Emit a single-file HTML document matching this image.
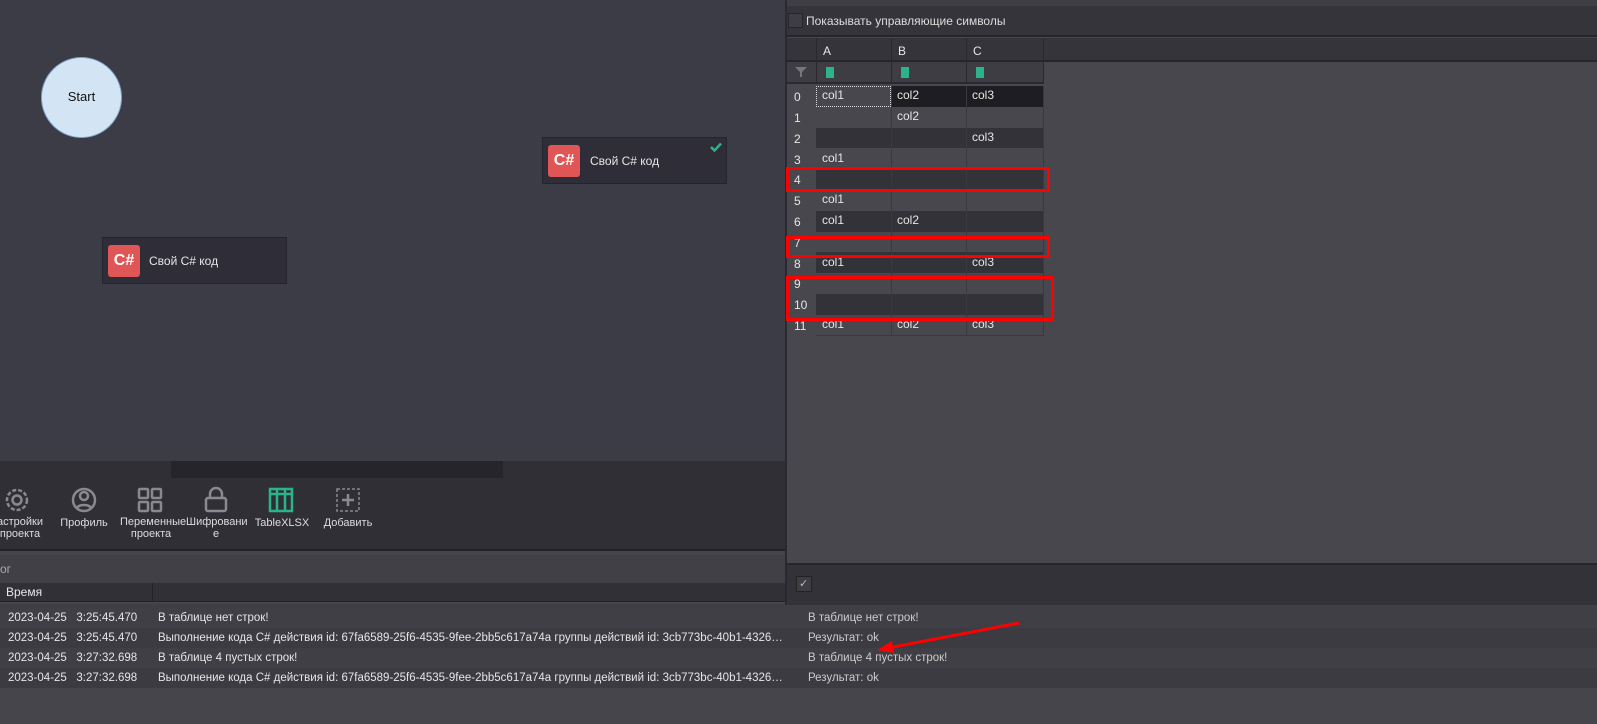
<!DOCTYPE html>
<html><head><meta charset="utf-8"><style>
*{margin:0;padding:0;box-sizing:border-box}
body{width:1597px;height:724px;overflow:hidden;background:#46454b;font-family:"Liberation Sans","DejaVu Sans",sans-serif;font-size:12px;color:#e6e6e6;position:relative}
.a{position:absolute}
.t{position:absolute;white-space:nowrap;line-height:14px}
.lg{font-size:11.5px}
.m{width:626px;overflow:hidden;text-overflow:ellipsis}
</style></head><body>
<!-- canvas -->
<div class="a" style="left:0;top:0;width:785px;height:461px;background:#3c3c46"></div>
<div class="a" style="left:41px;top:57px;width:81px;height:81px;border-radius:50%;background:#d3e5f5;border:1px solid #7ea6cf"></div>
<div class="t" style="left:41px;top:90px;width:81px;text-align:center;color:#111;font-size:13px">Start</div>
<div class="a" style="left:102px;top:237px;width:185px;height:47px;background:#2f2e38;border:1px solid #25242c"></div>
<div class="a" style="left:108px;top:245px;width:32px;height:32px;background:#e05555;border-radius:3px;color:#fff;font-weight:bold;font-size:16px;line-height:32px;text-align:center">C#</div>
<div class="t" style="left:149px;top:254px">Свой C# код</div>
<div class="a" style="left:542px;top:137px;width:185px;height:47px;background:#2f2e38;border:1px solid #25242c"></div>
<div class="a" style="left:548px;top:145px;width:32px;height:32px;background:#e05555;border-radius:3px;color:#fff;font-weight:bold;font-size:16px;line-height:32px;text-align:center">C#</div>
<div class="t" style="left:590px;top:154px">Свой C# код</div>
<svg class="a" style="left:710px;top:142px" width="12" height="10"><path d="M1 5l3.5 3.5L11 1.5" stroke="#2bb38a" stroke-width="2.5" fill="none"/></svg>
<!-- scrollbar + toolbar -->
<div class="a" style="left:0;top:461px;width:785px;height:89px;background:#302f36"></div>
<div class="a" style="left:171px;top:461px;width:332px;height:17px;background:#26252b"></div>
<div class="a" style="left:0;top:549px;width:785px;height:2px;background:#242329"></div>
<svg class="a" style="left:0;top:486px" width="380" height="30" fill="none" stroke="#8a898f" stroke-width="2.5">
<circle cx="17" cy="14" r="10" stroke-dasharray="4 2"/><circle cx="17" cy="14" r="4.5"/>
<circle cx="84" cy="14" r="11"/><circle cx="84" cy="10" r="4"/><path d="M77 22c2-4 12-4 14 0"/>
<rect x="139" y="3" width="9" height="9" rx="1"/><rect x="152" y="3" width="9" height="9" rx="1"/><rect x="139" y="16" width="9" height="9" rx="1"/><rect x="152" y="16" width="9" height="9" rx="1"/>
<path d="M210 12v-4a6 6 0 0 1 12 0v4"/><rect x="206" y="12" width="20" height="13" rx="2"/>
<g stroke="#2bb38a"><rect x="270" y="3" width="22" height="22"/><path d="M270 8h22M277 3v22M285 3v22"/></g>
<rect x="337" y="3" width="22" height="22" stroke-dasharray="3 2" stroke-width="1.5"/><path d="M348 8v12M342 14h12"/>
</svg>
<div class="t" style="left:-4px;top:516px;color:#ddd;font-size:11px;line-height:12px;text-align:center;width:48px">астройки<br>проекта</div>
<div class="t" style="left:60px;top:516px;color:#ddd;font-size:11px;width:48px;text-align:center">Профиль</div>
<div class="t" style="left:120px;top:516px;color:#ddd;font-size:11px;line-height:12px;width:62px;text-align:center">Переменные<br>проекта</div>
<div class="t" style="left:186px;top:516px;color:#ddd;font-size:11px;line-height:12px;width:60px;text-align:center">Шифровани<br>е</div>
<div class="t" style="left:254px;top:516px;color:#ddd;font-size:11px;width:56px;text-align:center">TableXLSX</div>
<div class="t" style="left:322px;top:516px;color:#ddd;font-size:11px;width:52px;text-align:center">Добавить</div>
<!-- log -->
<div class="a" style="left:0;top:555px;width:785px;height:28px;background:#414047"></div>
<div class="t" style="left:0;top:562px;color:#aaa">ог</div>
<div class="a" style="left:0;top:583px;width:1597px;height:19px;background:#313036;border-bottom:1px solid #242329"></div>
<div class="a" style="left:152px;top:583px;width:1px;height:19px;background:#242329"></div>
<div class="t" style="left:6px;top:585px">Время</div>
<div class="a" style="left:0;top:604px;width:1597px;height:84px;background:#403f46"></div>
<div class="a" style="left:0;top:628px;width:1597px;height:20px;background:#3c3b42"></div>
<div class="a" style="left:0;top:668px;width:1597px;height:20px;background:#3c3b42"></div>
<div class="t lg" style="left:8px;top:611px">2023-04-25&nbsp;&nbsp; 3:25:45.470</div>
<div class="t lg m" style="left:158px;top:611px">В таблице нет строк!</div>
<div class="t lg" style="left:8px;top:631px">2023-04-25&nbsp;&nbsp; 3:25:45.470</div>
<div class="t lg m" style="left:158px;top:631px">Выполнение кода C# действия id: 67fa6589-25f6-4535-9fee-2bb5c617a74a группы действий id: 3cb773bc-40b1-4326-9358-a8b2c1d4e5f6</div>
<div class="t lg" style="left:8px;top:651px">2023-04-25&nbsp;&nbsp; 3:27:32.698</div>
<div class="t lg m" style="left:158px;top:651px">В таблице 4 пустых строк!</div>
<div class="t lg" style="left:8px;top:671px">2023-04-25&nbsp;&nbsp; 3:27:32.698</div>
<div class="t lg m" style="left:158px;top:671px">Выполнение кода C# действия id: 67fa6589-25f6-4535-9fee-2bb5c617a74a группы действий id: 3cb773bc-40b1-4326-9358-a8b2c1d4e5f6</div>
<div class="t lg" style="left:808px;top:611px;color:#ccc">В таблице нет строк!</div>
<div class="t lg" style="left:808px;top:631px;color:#ccc">Результат: ok</div>
<div class="t lg" style="left:808px;top:651px;color:#ccc">В таблице 4 пустых строк!</div>
<div class="t lg" style="left:808px;top:671px;color:#ccc">Результат: ok</div>
<svg class="a" style="left:870px;top:615px" width="160" height="45"><path d="M149 8L18 33" stroke="#f00" stroke-width="3"/><path d="M7 35L22 26L24 38Z" fill="#f00"/></svg>
<!-- right panel -->
<div class="a" style="left:785px;top:0;width:812px;height:605px;background:#48474d;border-left:2px solid #2a292f"></div>
<div class="a" style="left:787px;top:0;width:810px;height:6px;background:#3f3e45"></div>
<div class="a" style="left:787px;top:6px;width:810px;height:31px;background:#35343a;border-bottom:2px solid #26252b"></div>
<div class="a" style="left:788px;top:13px;width:15px;height:15px;background:#3e3d44;border:1px solid #26252b"></div>
<div class="t" style="left:806px;top:14px;color:#ddd">Показывать управляющие символы</div>
<div class="a" style="left:787px;top:38px;width:810px;height:24px;background:#35343a;border-bottom:2px solid #26252b"></div>
<div class="a" style="left:787px;top:62px;width:256px;height:22px;background:#3e3d44;border-bottom:2px solid #2a292f"></div>
<svg class="a" style="left:795px;top:67px" width="12" height="10"><path d="M0 0h12L7 5v5H5V5Z" fill="#777"/></svg>
<div class="a" style="left:787px;top:563px;width:810px;height:42px;background:#333238;border-top:2px solid #26252b"></div>
<div class="a" style="left:796px;top:576px;width:16px;height:16px;background:#3e3d44;border:1px solid #222"></div>
<div class="t" style="left:799px;top:577px;color:#bbb;font-size:11px">✓</div>
<div class="a" style="left:816px;top:38px;width:1px;height:46px;background:#2a292f"></div>
<div class="a" style="left:891px;top:38px;width:1px;height:46px;background:#2a292f"></div>
<div class="a" style="left:966px;top:38px;width:1px;height:46px;background:#2a292f"></div>
<div class="a" style="left:1043px;top:38px;width:1px;height:46px;background:#2a292f"></div>
<div class="t" style="left:823px;top:44px">A</div>
<div class="t" style="left:898px;top:44px">B</div>
<div class="t" style="left:973px;top:44px">C</div>
<div class="a" style="left:826px;top:67px;width:8px;height:11px;background:#2bb38a"></div>
<div class="a" style="left:901px;top:67px;width:8px;height:11px;background:#2bb38a"></div>
<div class="a" style="left:976px;top:67px;width:8px;height:11px;background:#2bb38a"></div>
<!-- rows -->
<div class="a" style="left:787px;top:86px">
<div style="position:relative;width:257px">
<div class="a" style="top:0;left:29px;width:227px;height:21px;background:#333238"></div>
<div class="a" style="top:0;left:29px;width:75px;height:21px;background:#48474d;border:1px dotted #ddd"></div>
<div class="a" style="top:0;left:104px;width:152px;height:21px;background:#1e1d22"></div>
<div class="a" style="top:41.6px;left:29px;width:227px;height:20.8px;background:#333238"></div>
<div class="a" style="top:83.2px;left:29px;width:227px;height:20.8px;background:#333238"></div>
<div class="a" style="top:124.8px;left:29px;width:227px;height:20.8px;background:#333238"></div>
<div class="a" style="top:166.4px;left:29px;width:227px;height:20.8px;background:#333238"></div>
<div class="a" style="top:208px;left:29px;width:227px;height:20.8px;background:#333238"></div>
<div class="a" style="top:0;left:104px;width:1px;height:250px;background:#3a393f"></div>
<div class="a" style="top:0;left:179px;width:1px;height:250px;background:#3a393f"></div>
<div class="a" style="top:0;left:256px;width:1px;height:250px;background:#3a393f"></div>
<div class="a" style="top:249px;left:29px;width:228px;height:1px;background:#3a393f"></div>
</div></div>
<div class="t" style="left:794px;top:90px">0</div><div class="t" style="left:822px;top:88px">col1</div><div class="t" style="left:897px;top:88px">col2</div><div class="t" style="left:972px;top:88px">col3</div>
<div class="t" style="left:794px;top:111px">1</div><div class="t" style="left:897px;top:109px">col2</div>
<div class="t" style="left:794px;top:132px">2</div><div class="t" style="left:972px;top:130px">col3</div>
<div class="t" style="left:794px;top:153px">3</div><div class="t" style="left:822px;top:151px">col1</div>
<div class="t" style="left:794px;top:173px">4</div>
<div class="t" style="left:794px;top:194px">5</div><div class="t" style="left:822px;top:192px">col1</div>
<div class="t" style="left:794px;top:215px">6</div><div class="t" style="left:822px;top:213px">col1</div><div class="t" style="left:897px;top:213px">col2</div>
<div class="t" style="left:794px;top:236px">7</div>
<div class="t" style="left:794px;top:257px">8</div><div class="t" style="left:822px;top:255px">col1</div><div class="t" style="left:972px;top:255px">col3</div>
<div class="t" style="left:794px;top:277px">9</div>
<div class="t" style="left:794px;top:298px">10</div>
<div class="t" style="left:794px;top:319px">11</div><div class="t" style="left:822px;top:317px">col1</div><div class="t" style="left:897px;top:317px">col2</div><div class="t" style="left:972px;top:317px">col3</div>
<!-- red boxes -->
<div class="a" style="left:786px;top:167px;width:264px;height:25px;border:3px solid #f00"></div>
<div class="a" style="left:786px;top:236px;width:264px;height:22px;border:3px solid #f00"></div>
<div class="a" style="left:786px;top:276px;width:268px;height:45px;border:3px solid #f00"></div>
</body></html>
